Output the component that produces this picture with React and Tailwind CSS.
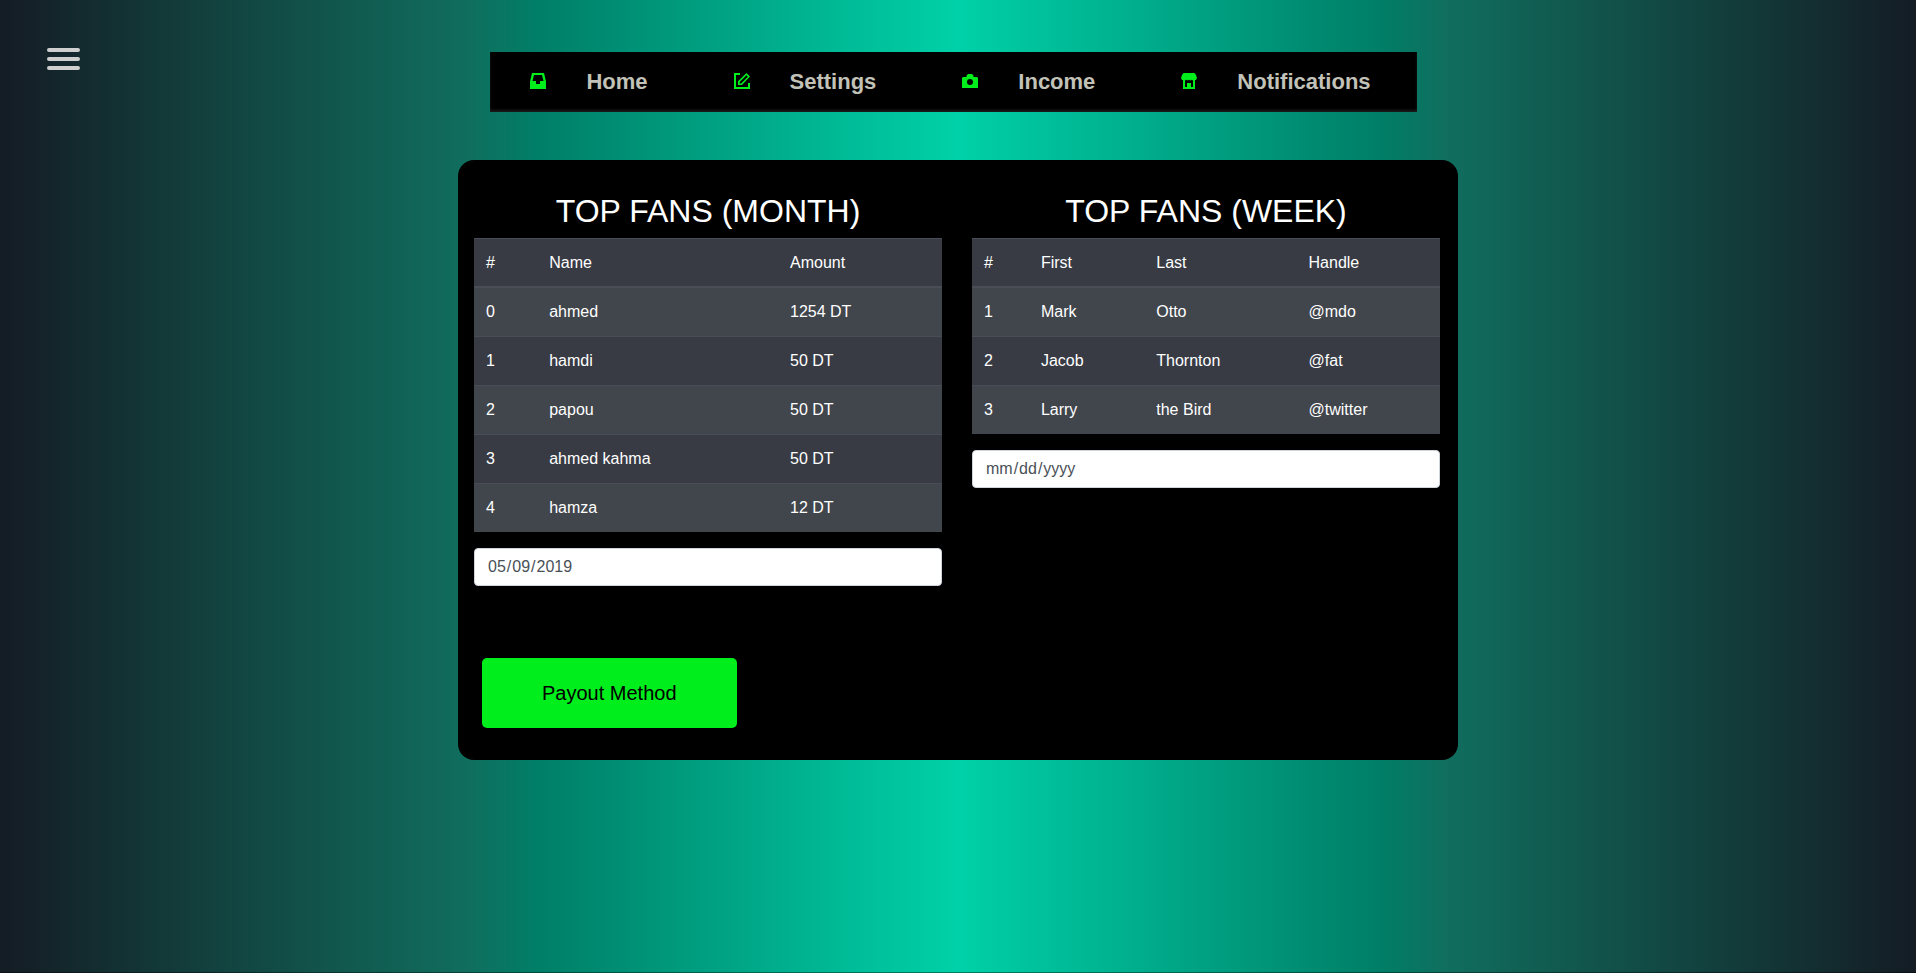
const GREEN = '#00ee1c';

function InboxIcon() {
  return (
    <svg viewBox="0 0 16 16" className="size-4 shrink-0" fill={GREEN} fillRule="evenodd" aria-hidden="true">
      <path d="M2 0h12L16 8.5V16H0V8.500zM4 2L2.500 8H6v3h4V8h3.500L12 2z" />
    </svg>
  );
}

function EditIcon() {
  return (
    <svg viewBox="0 0 16 16" className="size-4 shrink-0" fill={GREEN} fillRule="evenodd" aria-hidden="true">
      <path d="M0 0h6v2H2v12h12v-4h2v6H0z" />
      <path d="M12.500 0L16 3.500L8 12H4V8.300zM12.500 2.300L5.700 9v1.400h1.400L13.800 3.700z" />
    </svg>
  );
}

function CameraIcon() {
  return (
    <svg viewBox="0 0 16 16" className="size-4 shrink-0" fill={GREEN} fillRule="evenodd" aria-hidden="true">
      <path d="M4.500 2.500L6 1h4l1.500 1.500V4H15l1 1v10H0V5l1-1h3.500zM8 6a3 3 0 1 0 0 6a3 3 0 1 0 0-6z" />
    </svg>
  );
}

function StoreIcon() {
  return (
    <svg viewBox="0 0 16 16" className="size-4 shrink-0" fill={GREEN} fillRule="evenodd" aria-hidden="true">
      <path d="M2.500 0h11l1.500 2l1 3l-1 2h-1v9H2V7H1L0 5l1-3zM4 7.500V14h2v-4h4v4h2V7.500l-1.300-.8L9.300 7.500L8 6.700L6.700 7.500L5.300 6.700z" />
    </svg>
  );
}

const NAV = [
  { label: 'Home', Icon: InboxIcon },
  { label: 'Settings', Icon: EditIcon },
  { label: 'Income', Icon: CameraIcon },
  { label: 'Notifications', Icon: StoreIcon },
];

const MONTH = {
  columns: ['#', 'Name', 'Amount'],
  rows: [
    ['0', 'ahmed', '1254 DT'],
    ['1', 'hamdi', '50 DT'],
    ['2', 'papou', '50 DT'],
    ['3', 'ahmed kahma', '50 DT'],
    ['4', 'hamza', '12 DT'],
  ],
};

const WEEK = {
  columns: ['#', 'First', 'Last', 'Handle'],
  rows: [
    ['1', 'Mark', 'Otto', '@mdo'],
    ['2', 'Jacob', 'Thornton', '@fat'],
    ['3', 'Larry', 'the Bird', '@twitter'],
  ],
};

function FansPanel({ title, data, date }) {
  return (
    <section className="min-w-0">
      <h2 className="mb-2 text-center text-[32px] leading-[38px]">{title}</h2>
      <table className="mb-4 w-full border-collapse text-left text-base">
        <thead>
          <tr className="bg-[#383b44]">
            {data.columns.map((name) => (
              <th key={name} scope="col" className="border-t border-b-2 border-[#484d58] px-3 pt-3 pb-[11px] font-normal">
                {name}
              </th>
            ))}
          </tr>
        </thead>
        <tbody>
          {data.rows.map((row) => (
            <tr key={row[0]} className="odd:bg-[#41454c] even:bg-[#383b44]">
              {row.map((cell, i) => (
                <td key={i} className="border-t border-[#484d58] p-3">
                  {cell}
                </td>
              ))}
            </tr>
          ))}
        </tbody>
      </table>
      <input
        type="date"
        aria-label={title}
        defaultValue={date}
        className="block h-[38px] w-full rounded border border-[#ced4da] bg-white px-3 py-1.5 text-base text-[#495057] [&::-webkit-calendar-picker-indicator]:hidden"
      />
    </section>
  );
}

export default function App() {
  return (
    <div className="min-h-screen border-b border-black/40 bg-[linear-gradient(to_right,#141c24_0%,#106e5e_24.5%,#007e67_28%,#00d1a8_50%,#007e67_72%,#106e5e_75.5%,#141c24_100%)] pb-8 font-['Liberation_Sans',Arial,sans-serif] text-white">
      <header className="grid grid-cols-[1fr_auto_1fr] items-start pb-12">
        <button type="button" aria-label="Open menu" className="mt-12 ml-[47px] flex w-[33px] flex-col gap-[5px]">
          <span className="h-1 w-full rounded-xs bg-[#cfcfcf]" />
          <span className="h-1 w-full rounded-xs bg-[#cfcfcf]" />
          <span className="h-1 w-full rounded-xs bg-[#cfcfcf]" />
        </button>
        <nav className="mt-[52px] mr-[9px] flex h-[60px] bg-black pb-0.5 shadow-[inset_0_-2px_3px_0px_#1c1c1c]">
          {NAV.map(({ label, Icon }) => (
            <a
              key={label}
              href="#"
              className="flex items-center gap-10 pr-[46px] pl-10 text-[22px] font-bold text-[#c2c2b8]"
            >
              <Icon />
              {label}
            </a>
          ))}
        </nav>
      </header>

      <main className="mx-auto w-full max-w-[1000px] rounded-2xl bg-black py-8 pr-[18px] pl-4">
        <div className="grid grid-cols-2 gap-[30px]">
          <FansPanel title="TOP FANS (MONTH)" data={MONTH} date="2019-05-09" />
          <FansPanel title="TOP FANS (WEEK)" data={WEEK} />
        </div>
        <button type="button" className="mt-[72px] ml-2 h-[70px] rounded-[5px] bg-[#00ee1c] px-[60px] text-xl text-black">
          Payout Method
        </button>
      </main>
    </div>
  );
}
